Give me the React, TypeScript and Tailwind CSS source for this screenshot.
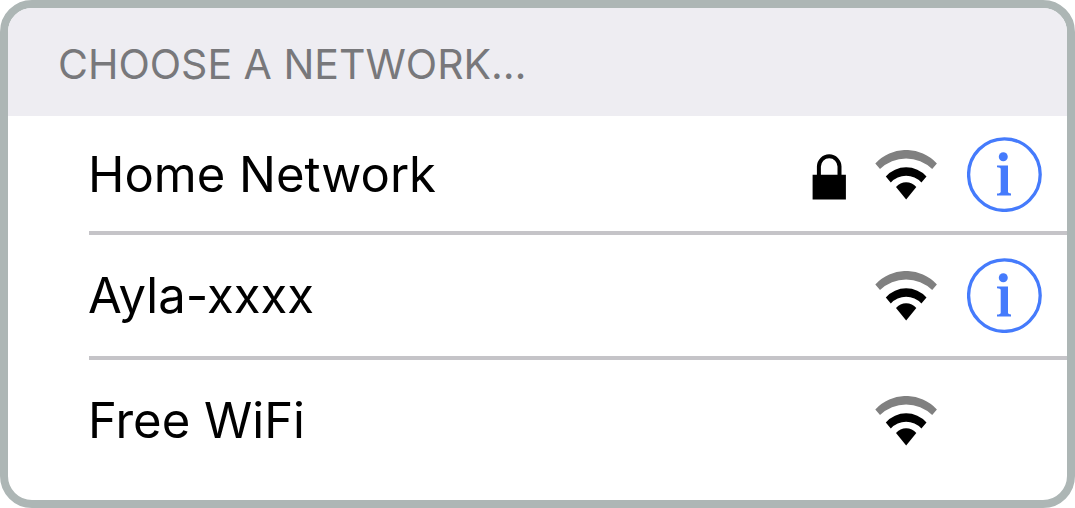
type Network = {
  name: string;
  secured: boolean;
  hasInfo: boolean;
};

function LockIcon() {
  return (
    <svg role="img" aria-label="Secured" viewBox="0 0 34 50" className="h-[50px] w-[34px] shrink-0">
      <path d="M6.9 27V16.6a10.3 10.3 0 0 1 20.6 0V27" fill="none" stroke="#000" strokeWidth="4" />
      <path d="M0.6 24.8h33.3v24.7H0.6z" />
    </svg>
  );
}

function WifiIcon() {
  return (
    <svg role="img" aria-label="Signal strength" viewBox="0 0 62 50" className="h-[50px] w-[62px] shrink-0">
      <path d="M0.3 13.4A42 42 0 0 1 61.9 13.4L57.2 19A37.4 37.4 0 0 0 5 19Z" fill="#808080" />
      <path d="M10.8 26.4A27.4 27.4 0 0 1 51.5 26.4L46.4 32.4A20.8 20.8 0 0 0 15.8 32.4Z" />
      <path d="M21 37A13.4 13.4 0 0 1 41.3 37L31.2 49.6Z" />
    </svg>
  );
}

function InfoButton({ name }: { name: string }) {
  return (
    <button type="button" aria-label={`More info about ${name}`} className="block rounded-full text-[#457bfc]">
      <svg aria-hidden="true" viewBox="0 0 75 75" fill="currentColor" className="size-[75px]">
        <circle cx="37.4" cy="37.6" r="35.8" fill="none" stroke="currentColor" strokeWidth="3.3" />
        <circle cx="36.3" cy="19.7" r="4.5" />
        <path d="M30 28.6H41V55Q41 56.3 44 56.6V58.4H30V56.6Q33.7 56.3 33.7 55V32Q33.7 30.4 30 30.2Z" />
      </svg>
    </button>
  );
}

function NetworkRow({ name, secured, hasInfo }: Network) {
  return (
    <li className="flex h-[125px] items-center border-b-4 border-[#c5c4c8] pr-[25px] first:h-[119px] first:pt-[2px] last:h-[122px] last:border-b-0">
      <span className="-ml-px grow text-[49px] leading-[60px]">{name}</span>
      {secured && <LockIcon />}
      <div className="ml-[29px]">
        <WifiIcon />
      </div>
      <div className="ml-[30px] w-[75px] shrink-0">{hasInfo && <InfoButton name={name} />}</div>
    </li>
  );
}

const networks: Network[] = [
  { name: "Home Network", secured: true, hasInfo: true },
  { name: "Ayla-xxxx", secured: false, hasInfo: true },
  { name: "Free WiFi", secured: false, hasInfo: false },
];

export default function App() {
  return (
    <main className="overflow-hidden rounded-[32px] border-8 border-[#adb6b5] bg-white pb-[18px] font-[Inter,sans-serif] text-black">
      <h1 className="bg-[#eeedf2] px-[50px] pt-[30px] pb-[26px] text-[41px] leading-[52px] text-[#78787b]">
        CHOOSE A NETWORK…
      </h1>
      <ul className="pl-[81px]">
        {networks.map((network) => (
          <NetworkRow key={network.name} {...network} />
        ))}
      </ul>
    </main>
  );
}
